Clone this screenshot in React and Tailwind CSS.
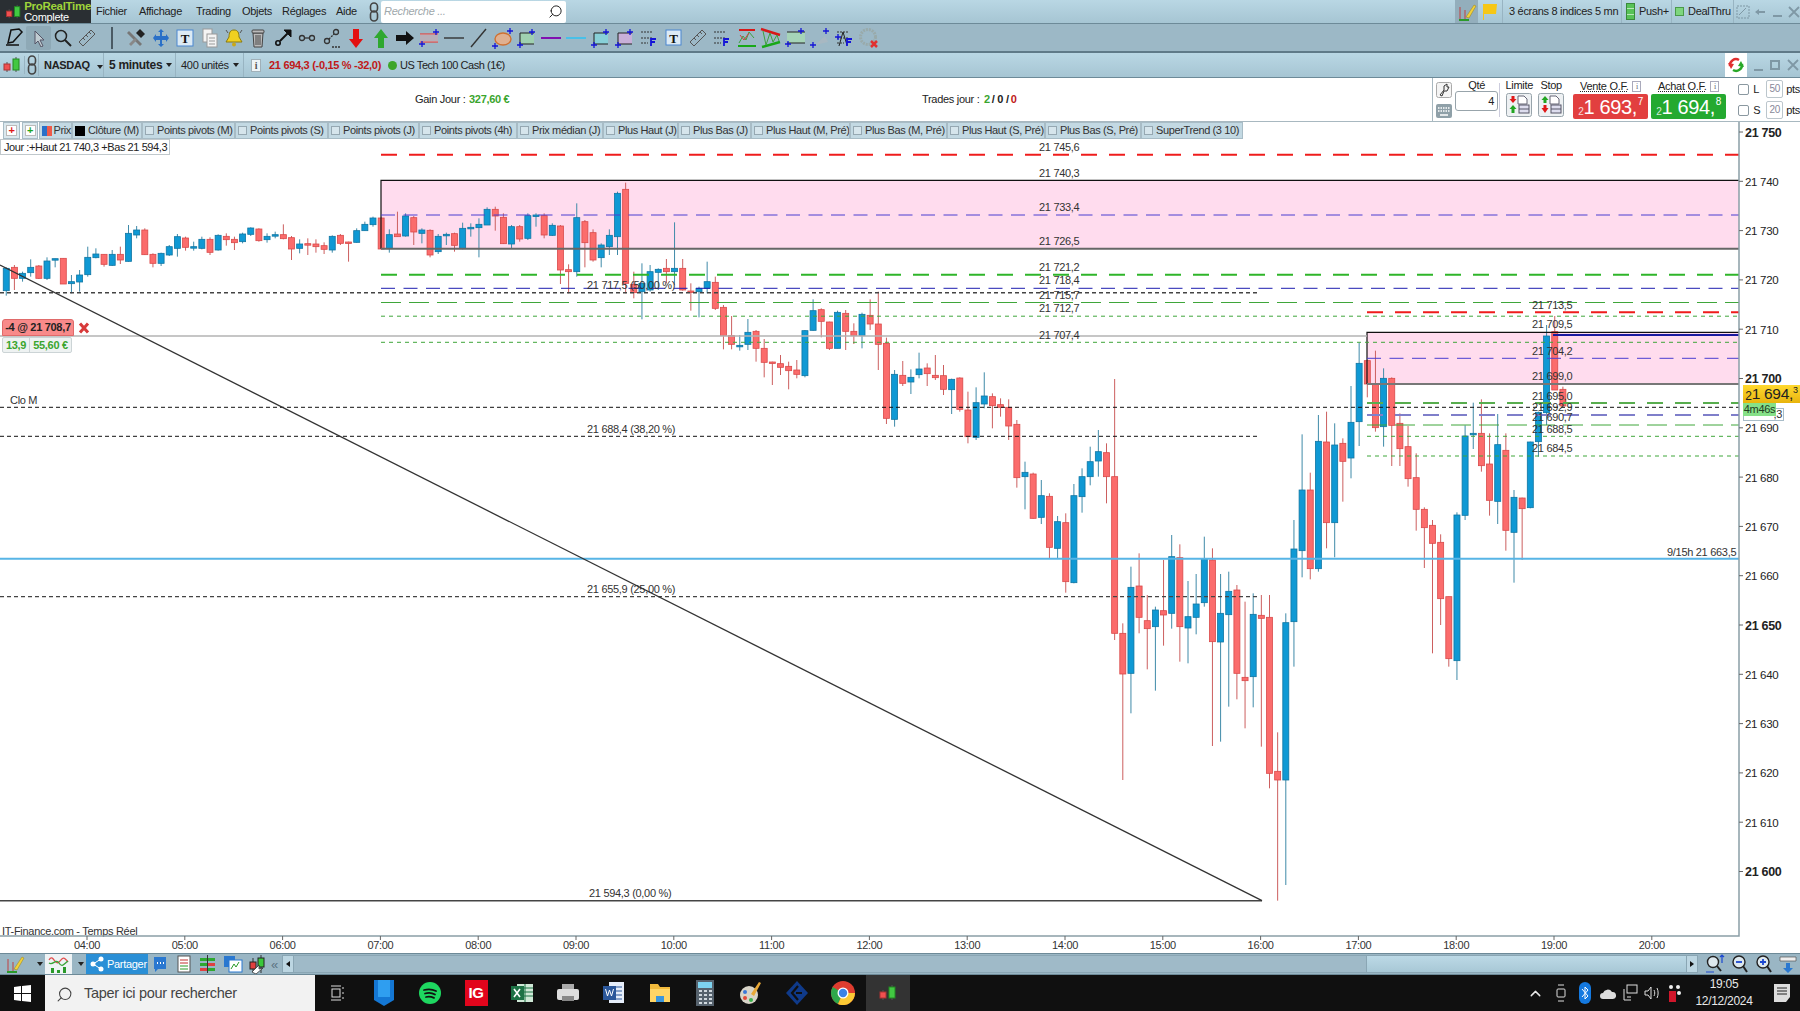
import { Search, ChevronUp } from 'lucide-react';

// rows are [blue?, wickTop, bodyTop, bodyBot, wickBot], measured on 3x crops of the chart
const block = (off, rows) => rows.map(([b, wt, t, d, wb]) => ({ blue: !!b, wt: (wt + off) / 3, t: (t + off) / 3, d: (d + off) / 3, wb: (wb + off) / 3 }));

const candles = [
  ...block(390, [
    [1,412,415,482,497],[0,405,412,445,480],[1,425,430,445,455],[1,388,412,428,440],[0,405,408,445,447],[1,382,393,445,450],
    [1,386,386,388,412],[0,385,385,462,462],[1,435,455,461,490],[1,420,435,456,485],[1,350,382,434,440],[1,355,372,383,385],
    [0,373,373,403,410],[1,360,373,406,408],[0,350,373,390,402],[1,285,310,394,395],[1,288,300,315,325],[0,295,300,374,375],
    [0,370,373,400,412],[1,368,370,400,408],[1,345,350,375,378],[1,312,320,355,380],[0,320,324,352,362],[1,335,350,352,362],
    [1,320,328,355,358],[0,322,328,367,375],[1,313,316,360,362],[0,310,319,329,347],[0,320,328,338,360],[1,308,312,335,340],
    [1,292,294,313,318],[0,295,297,332,335],[1,310,319,329,338],[1,305,314,317,325],[0,283,314,326,328],[0,318,323,357,390],
    [1,328,342,355,370],[0,325,341,344,375],[0,328,342,350,368],[0,337,347,358,372],[1,316,319,360,368],[0,312,316,340,345],
    [0,335,336,338,395],[1,295,302,337,338],[1,275,283,302,302],[1,260,264,284,290],[0,262,264,357,358],[1,298,314,356,368],
    [0,245,312,320,320],[1,250,258,318,320],[0,258,263,306,345],[1,295,300,310,340],[0,298,301,375,382],[1,312,319,365,372],
    [1,308,313,315,345],[0,308,311,346,365],[1,278,295,356,358],[1,280,292,294,320],[1,265,283,293,382],[1,232,238,285,285],
    [0,230,238,258,302],[0,250,262,341,342],[1,285,290,342,355],[0,285,290,327,335],[1,250,257,325,330],[1,250,255,257,290],
    [0,250,257,315,325],[1,280,286,316,318],[0,285,288,420,462],[0,403,419,425,490],[1,220,263,425,440],[0,270,275,338,412],
    [0,298,308,390,395],[1,340,345,383,412],[1,298,316,350,375],[1,185,190,320,375],[0,158,178,460,490],
  ]),
  ...block(420, [
    [0,395,433,458,475],[1,370,430,455,538],[1,375,395,450,455],[1,385,388,397,450],[0,357,385,395,430],[1,247,385,395,435],
    [0,357,385,450,452],[0,430,453,457,512],[1,440,445,455,532],[1,365,425,445,460],[0,410,427,505,510],[0,495,502,587,628],
    [0,528,587,613,628],[1,585,616,618,632],[1,537,577,613,630],[0,570,574,625,665],[0,597,625,667,712],[0,665,666,670,735],
    [0,645,671,682,705],[0,665,679,692,748],[0,660,690,703,715],[1,570,572,707,712],[1,478,512,571,572],[0,505,509,544,592],
    [0,545,546,625,630],[1,512,517,625,625],[0,510,520,574,630],[0,550,574,587,612],[1,518,523,587,625],[0,478,526,552,570],
    [0,455,552,613,690],[0,593,610,835,852],[1,690,703,838,860],[0,663,706,730,738],[1,688,712,726,762],[1,638,687,704,715],
    [0,670,684,701,738],[0,645,706,713,720],[0,675,707,748,765],[1,716,718,749,822],[0,712,714,808,815],[0,755,810,890,910],
    [1,742,788,892,900],[1,697,768,792,805],[0,760,770,797,865],
  ]),
  ...block(900, [
    [0,295,314,322,350],[0,298,322,378,420],[0,360,373,533,563],[1,485,517,530,628],[0,518,522,655,656],[1,540,587,652,672],
    [0,580,589,742,775],[1,648,665,745,775],[0,640,668,845,878],[1,552,587,848,850],[1,505,530,590,638],[1,440,485,530,556],
    [1,390,455,483,530],[0,430,458,530,610],[0,237,530,1000,1020],[0,970,1000,1122,1440],[1,800,862,1120,1240],[0,760,858,952,1000],
    [0,885,962,986,1108],[1,920,930,980,1172],[0,780,932,945,1037],[1,705,770,940,986],[0,733,773,980,1085],[1,843,950,984,1090],
    [1,822,912,952,1003],[1,710,778,908,920],[0,745,780,1025,1338],[1,822,940,1026,1325],[1,815,874,944,1220],[0,855,870,1120,1198],
    [0,905,1132,1142,1285],[1,880,943,1130,1222],[0,885,946,955,1340],[0,885,952,1420,1465],[0,1297,1414,1440,1802],[1,940,968,1440,1755],
    [1,660,747,965,1100],[1,403,570,752,832],[0,518,570,806,838],[1,345,424,806,815],[0,335,426,668,745],[1,370,435,668,772],
    [0,415,430,484,605],[1,258,367,474,535],[1,128,190,365,438],[0,180,182,252,292],[0,152,252,383,395],[1,205,235,380,440],
    [0,232,235,376,498],[0,340,370,446,498],[0,378,440,536,560],[0,460,533,628,692],[0,622,628,683,804],[0,660,676,730,1060],
    [0,703,727,896,975],[0,890,890,1076,1100],[1,637,645,1082,1140],[1,376,408,646,660],[1,308,400,404,447],[0,298,400,497,515],
    [0,400,492,601,647],[1,342,434,604,672],[0,400,451,691,752],[1,570,592,697,848],[0,593,594,626,780],[1,425,426,623,625],
    [1,335,337,425,470],[1,75,108,338,375],[0,48,95,270,270],[0,260,268,318,320],
  ]),
];

const GREEN = '#3fa63a';
const levels = [
  { y: 154.7, x1: 381, c: '#ef1c1c', w: 2, d: '16 12' },
  { y: 215, x1: 381, c: '#4a3ed0', w: 1, d: '14 8.5' },
  { y: 274.7, x1: 381, c: '#2fb52a', w: 2, d: '16 12' },
  { y: 288.3, x1: 381, c: '#1d1db0', w: 1, d: '14 8.5' },
  { y: 292.7, x1: 0, x2: 1258, c: '#444', w: 1.4, d: '4 3' },
  { y: 302.5, x1: 381, c: GREEN, w: 1, d: '20 8' },
  { y: 316.2, x1: 381, c: GREEN, w: 1, d: '4 4' },
  { y: 336, x1: 0, x2: 1367, c: '#b3b3b3', w: 1.5 },
  { y: 342.3, x1: 381, c: GREEN, w: 1, d: '4 4' },
  { y: 407.3, x1: 0, c: '#111', w: 1, d: '4 3' },
  { y: 436.3, x1: 0, x2: 1258, c: '#111', w: 1, d: '4 3' },
  { y: 558.7, x1: 0, c: '#57b5e6', w: 2 },
  { y: 596.7, x1: 0, x2: 1258, c: '#444', w: 1.2, d: '4 3' },
  { y: 900.7, x1: 0, x2: 1262, c: '#444', w: 1.5 },
  { y: 312.3, x1: 1367, c: '#ef1c1c', w: 2, d: '16 12' },
  { y: 335, x1: 1553, c: '#1a1aa0', w: 2 },
  { y: 358.3, x1: 1367, c: '#4a3ed0', w: 1, d: '14 8.5' },
  { y: 403, x1: 1367, c: '#58ad4e', w: 2, d: '16 12' },
  { y: 415, x1: 1367, c: '#7f7fca', w: 2, d: '16 12' },
  { y: 425, x1: 1367, c: GREEN, w: 1, d: '20 8' },
  { y: 436.3, x1: 1367, c: GREEN, w: 1, d: '4 4' },
  { y: 456, x1: 1367, c: GREEN, w: 1, d: '4 4' },
];

const priceLabels = [
  [1039, 147, '21 745,6'], [1039, 172.7, '21 740,3'], [1039, 207.3, '21 733,4'], [1039, 241, '21 726,5'], [1039, 267.3, '21 721,2'],
  [1039, 280.3, '21 718,4'], [1039, 294.7, '21 715,7'], [1039, 308.3, '21 712,7'], [1039, 334.7, '21 707,4'],
  [587, 285, '21 717,5 (50,00 %)'], [587, 428.7, '21 688,4 (38,20 %)'], [587, 589, '21 655,9 (25,00 %)'], [589, 893, '21 594,3 (0,00 %)'],
  [1532, 304.7, '21 713,5'], [1532, 324.3, '21 709,5'], [1532, 351, '21 704,2'], [1532, 376.3, '21 699,0'], [1532, 396, '21 695,0'],
  [1532, 407, '21 692,9'], [1532, 417.3, '21 690,7'], [1532, 428.7, '21 688,5'], [1532, 448.3, '21 684,5'],
  [1667, 551.7, '9/15h 21 663,5'], [10, 400, 'Clo M'], [2, 931, 'IT-Finance.com - Temps Réel'],
];

const axis = ['21 750','21 740','21 730','21 720','21 710','21 700','21 690','21 680','21 670','21 660','21 650','21 640','21 630','21 620','21 610','21 600'];
const hours = ['04:00','05:00','06:00','07:00','08:00','09:00','10:00','11:00','12:00','13:00','14:00','15:00','16:00','17:00','18:00','19:00','20:00'];

const legend = [
  ['Points pivots (M)', 'w-[93px]'], ['Points pivots (S)', 'w-[93px]'], ['Points pivots (J)', 'w-[91px]'], ['Points pivots (4h)', 'w-[98px]'],
  ['Prix médian (J)', 'w-[86px]'], ['Plus Haut (J)', 'w-[75px]'], ['Plus Bas (J)', 'w-[73px]'], ['Plus Haut (M, Pré)', 'w-[99px]'],
  ['Plus Bas (M, Pré)', 'w-[97px]'], ['Plus Haut (S, Pré)', 'w-[98px]'], ['Plus Bas (S, Pré)', 'w-[96px]'], ['SuperTrend (3 10)', 'w-[102px]'],
];

const Chart = () => (
  <svg viewBox="0 122 1800 831" className="block w-[1800px] h-[831px]" style={{ fontFamily: '"Liberation Sans", Arial, sans-serif' }}>
    <rect x="381" y="180.3" width="1358" height="68.4" fill="#ffdcee" />
    <rect x="1367" y="332.3" width="372" height="51.7" fill="#ffdcee" />
    {candles.map((c, i) => {
      const x = 6.25 + 8.15 * i;
      return (
        <g key={i}>
          <line x1={x} x2={x} y1={c.wt} y2={c.wb} stroke={c.blue ? '#3f8aa8' : '#cc5f5f'} />
          <rect x={x - 3} y={c.t} width="6" height={Math.max(c.d - c.t, 1.5)} fill={c.blue ? '#0f99d4' : '#fb6c6c'} stroke={c.blue ? '#0f76a3' : '#d94a4a'} strokeWidth="0.8" />
        </g>
      );
    })}
    <path d="M381 248.7V180.3H1739" fill="none" stroke="#111" strokeWidth="1.2" />
    <path d="M381 248.7H1739" stroke="#666" strokeWidth="2" />
    <path d="M1739 332.3H1367V384" fill="none" stroke="#111" strokeWidth="1.2" />
    <path d="M1367 384H1739" stroke="#777" strokeWidth="2" />
    {levels.map((l, i) => (
      <line key={i} x1={l.x1} x2={l.x2 ?? 1739} y1={l.y} y2={l.y} stroke={l.c} strokeWidth={l.w} strokeDasharray={l.d} />
    ))}
    <line x1="0" y1="265" x2="1262" y2="900.7" stroke="#333" strokeWidth="1.3" />
    {priceLabels.map(([x, y, t]) => (
      <text key={t} x={x} y={y + 4} fontSize="11" fill="#333">{t}</text>
    ))}
    {/* price axis */}
    <path d="M1739 122V936H0" fill="none" stroke="#8b9ea7" strokeWidth="1.5" />
    {axis.map((t, i) => {
      const y = 132 + 49.3 * i;
      const bold = i % 5 === 0;
      return (
        <g key={t}>
          <line x1="1739" x2="1743" y1={y} y2={y} stroke="#666" />
          <text x="1745" y={y + 4.5} fontSize={bold ? 12.5 : 11.5} fontWeight={bold ? 700 : 400} fill="#222">{t}</text>
        </g>
      );
    })}
    {hours.map((t, i) => {
      const x = 87 + 97.8 * i;
      return (
        <g key={t}>
          <line x1={x} x2={x} y1="936" y2="940" stroke="#666" />
          <text x={x} y="949" fontSize="11" fill="#333" textAnchor="middle">{t}</text>
        </g>
      );
    })}
  </svg>
);

const Box = ({ w = 22, children }) => (
  <svg width={w} height="22" viewBox={`0 0 ${w} 22`} className="shrink-0">{children}</svg>
);

const Plus = ({ x, y, c = '#1414d8' }) => <path d={`M${x - 3} ${y}h6M${x} ${y - 3}v6`} stroke={c} strokeWidth="1.3" />;

const FLines = ({ c = '#1414d8' }) => (
  <>
    <path d="M3 5h11M3 11h11M3 16h7" stroke="#333" strokeDasharray="2 1" />
    <path d="M13 19v-7h5M13 15h4" fill="none" stroke={c} strokeWidth="1.8" />
  </>
);

const toolIcons = [
  <path d="M8 3l8-1 3 3-9 10-5 1zM3 18h13" fill="none" stroke="#111" strokeWidth="1.5" />,
  null,
  <g fill="none" stroke="#222" strokeWidth="1.5"><circle cx="9" cy="9" r="5.5" /><path d="M13 13l6 6" strokeWidth="2" /></g>,
  <g fill="none" stroke="#555"><path d="M3 15L15 3l4 4L7 19z" /><path d="M7 11l2 2M10 8l2 2M13 5l2 2" /></g>,
  null,
  <g><path d="M4 4l13 13-2 2L2 6z" fill="#777" /><path d="M11 6l4-4 5 5-4 4z" fill="#222" /><path d="M4 17l6-6 2 2-6 6z" fill="#888" /></g>,
  <path d="M11 2l3 3h-2v4h4V7l3 4-3 4v-2h-4v4h2l-3 3-3-3h2v-4H6v2l-3-4 3-4v2h4V5H8z" fill="#2a70c8" />,
  <g><rect x="3" y="3" width="16" height="16" fill="#dceaf4" stroke="#4a86d0" /><text x="11" y="16" fontSize="13" fontWeight="700" textAnchor="middle" fontFamily='"Liberation Serif", serif' fill="#111">T</text></g>,
  <g stroke="#999" fill="#f4f4f4"><rect x="4" y="2" width="9" height="13" /><rect x="8" y="7" width="10" height="13" /><path d="M10 11h6M10 14h6M10 17h6" /></g>,
  <g><path d="M11 3c4 0 5 3 5 7l3 5H3l3-5c0-4 1-7 5-7z" fill="#f0d020" stroke="#8a7a10" /><circle cx="11" cy="17.5" r="2" fill="#c9a818" /><path d="M3 3l2 3M19 3l-2 3" stroke="#555" /></g>,
  <g fill="#bbb" stroke="#444"><path d="M6 6h10l-1 14H7z" /><rect x="5" y="3" width="12" height="3" rx="1" /><path d="M9 8v10M11 8v10M13 8v10" /></g>,
  <g stroke="#111" fill="none"><circle cx="6" cy="16" r="2.2" strokeWidth="1.6" /><path d="M8 14l9-9" strokeWidth="2" /><path d="M12 3h7v7z" fill="#111" /></g>,
  <g stroke="#333" fill="none" strokeWidth="1.3"><circle cx="6" cy="11" r="2.5" /><circle cx="16" cy="11" r="2.5" /><path d="M8.5 11h5" /></g>,
  <g stroke="#333" fill="none" strokeWidth="1.3"><circle cx="6" cy="14" r="2.5" /><circle cx="15" cy="5" r="2.5" /><path d="M8 12l5-5M11 20h9" strokeDasharray="2 1" /></g>,
  <path d="M8 2h6v10h4l-7 9-7-9h4z" fill="#e31010" />,
  <path d="M11 2l7 9h-4v10H8V11H4z" fill="#2fa82f" />,
  <path d="M2 8h10V4l8 7-8 7v-4H2z" fill="#111" />,
  <g><path d="M2 7h18M2 15h18" stroke="#d45a5a" strokeWidth="1.4" /><rect x="2" y="7" width="18" height="8" fill="#e0a0a0" opacity=".4" /><Plus x={18} y={5} /><Plus x={4} y={17} /></g>,
  <path d="M1 11h20" stroke="#333" strokeWidth="1.4" />,
  <path d="M4 20L19 2" stroke="#333" strokeWidth="1.4" />,
  <g><ellipse cx="11" cy="12" rx="8" ry="6" fill="#e0b090" stroke="#d07030" strokeWidth="1.4" /><Plus x={18} y={4} /><Plus x={3} y={19} /></g>,
  <g><rect x="4" y="6" width="14" height="11" fill="#9fd0b0" /><path d="M4 6h14M4 17h14M4 6v11" stroke="#222" /><Plus x={16} y={5} /><Plus x={4} y={18} /></g>,
  <path d="M1 11h20" stroke="#8010b0" strokeWidth="2" />,
  <path d="M1 11h20" stroke="#48c0e8" strokeWidth="2" />,
  <g><rect x="5" y="6" width="14" height="11" fill="#88d0d8" /><path d="M5 6h14M5 17h14M5 6v11" stroke="#222" /><Plus x={17} y={5} /><Plus x={5} y={18} /></g>,
  <g><rect x="4" y="6" width="14" height="11" fill="#c8b0d8" /><path d="M4 6h14M4 17h14M4 6v11" stroke="#222" /><Plus x={16} y={5} /><Plus x={4} y={18} /></g>,
  <FLines />,
  <g><rect x="3" y="3" width="15" height="15" fill="#dceaf4" stroke="#4a86d0" /><text x="10.5" y="15.5" fontSize="13" fontWeight="700" textAnchor="middle" fontFamily='"Liberation Serif", serif' fill="#111">T</text></g>,
  <g fill="none" stroke="#555"><path d="M3 15L15 3l4 4L7 19z" /><path d="M7 11l2 2M10 8l2 2M13 5l2 2" /></g>,
  <FLines />,
  <g fill="none"><path d="M3 3h16" stroke="#d81818" strokeWidth="2" /><path d="M2 19h18" stroke="#18a818" strokeWidth="2" /><path d="M3 16l4-7 3 4 3-8 5 6" stroke="#40a040" /><path d="M4 8l4 5 5-7" stroke="#d04040" /></g>,
  <g fill="none"><path d="M1 2l19 6" stroke="#d81818" strokeWidth="2.5" /><path d="M2 20l18-5" stroke="#18a818" strokeWidth="2.5" /><path d="M3 4l3 14 4-12 3 9 4-7 2 6" stroke="#40a040" /></g>,
  <g><rect x="2" y="5" width="18" height="11" fill="#a6d4b8" /><path d="M2 5h18M2 16h18" stroke="#222" /><Plus x={16} y={4} /><Plus x={3} y={17} /></g>,
  <g><path d="M6 18L16 9l3 6z" fill="#a8b8c2" /><Plus x={4} y={18} /><Plus x={17} y={4} /></g>,
  <g><path d="M5 19L9 5l4 13" fill="none" stroke="#222" /><FLines /><Plus x={4} y={10} /></g>,
  <g><circle cx="10" cy="10" r="7.5" fill="none" stroke="#9aa" strokeWidth="3" strokeDasharray="2 1" /><path d="M13 14l6 6M19 14l-6 6" stroke="#e03030" strokeWidth="2.5" /></g>,
];

const Bar = ({ className = '', children }) => (
  <div className={`flex items-center bg-linear-to-b from-[#b9d7e4] to-[#a6c5d3] text-[11px] text-[#222] border-b border-[#6d8a98] ${className}`}>{children}</div>
);

const Caret = () => <span className="ml-1 inline-block w-0 h-0 border-x-[3.5px] border-x-transparent border-t-[4px] border-t-[#222]" />;

const LinkIcon = () => (
  <svg width="12" height="22" viewBox="0 0 12 22" fill="none" stroke="#444" strokeWidth="1.6"><rect x="2.5" y="2" width="7" height="9" rx="3.5" /><rect x="2.5" y="10" width="7" height="10" rx="3.5" /></svg>
);

const MiniCandles = ({ h = 18 }) => (
  <svg width="18" height={h} viewBox="0 0 18 18"><path d="M4 6v10M13 1v15" stroke="#555" /><rect x="1" y="8" width="6" height="6" fill="#f05050" stroke="#a33" /><rect x="10" y="3" width="6" height="11" fill="#42c842" stroke="#282" /></svg>
);

const WinBtns = ({ dim }) => (
  <div className={`flex items-center gap-[7px] text-[#7f98a5] ${dim}`}>
    <span className="w-[9px] h-[2px] mt-[9px] bg-[#7f98a5]" />
    <span className="w-[10px] h-[10px] border-2 border-[#7f98a5]" />
    <svg width="12" height="12" viewBox="0 0 12 12"><path d="M1 1l10 10M11 1L1 11" stroke="#7f98a5" strokeWidth="1.8" /></svg>
  </div>
);

const OrderArrows = ({ flip }) => (
  <svg width="26" height="24" viewBox="0 0 26 24">
    <rect x=".5" y=".5" width="25" height="23" rx="2" fill="#eef1f3" stroke="#98a4ab" />
    <path d="M12 3h6l3 3v5h-9z" fill="#fff" stroke="#667" /><rect x="13" y="12" width="10" height="8" fill="#dde" stroke="#556" /><path d="M13 16h10" stroke="#556" />
    <path d={flip ? 'M7 3l3.5 4H8.500v3h-3V7H3.500z' : 'M5.500 3h3v3h2L7 10 3.500 6h2z'} fill={flip ? '#22a522' : '#e01818'} />
    <path d={flip ? 'M5.500 12h3v3h2L7 20l-3.500-5h2z' : 'M7 12l3.500 4H8.500v4h-3v-4H3.500z'} fill={flip ? '#e01818' : '#22a522'} />
  </svg>
);

const PriceBtn = ({ color, v, s }) => (
  <div className={`w-[75px] h-[25px] rounded-[2px] flex items-end justify-center text-white leading-none whitespace-nowrap ${color}`}>
    <span className="text-[10px] mb-[2px] opacity-80">2</span>
    <span className="text-[20px] mb-[2px] tracking-[-0.4px]">{v}</span>
    <span className="text-[10px] self-start mt-[3px] ml-[1px]">{s}</span>
  </div>
);

const InfoBox = () => <span className="w-[9px] h-[11px] ml-1 shrink-0 border border-[#aab] bg-white text-[8px] leading-[10px] text-center text-[#667] font-['Liberation_Serif']">i</span>;

const Check = () => <span className="w-[11px] h-[11px] rounded-[2px] border border-[#8a98a0] bg-white shrink-0" />;

const TradePanel = () => (
  <div className="w-[368px] h-full border-l border-[#a8b8c0] flex text-[11px] text-[#222]">
    <div className="w-[22px] pl-[3px] pt-[4px] flex flex-col gap-[6px]">
      <svg width="16" height="16" viewBox="0 0 16 16"><rect x=".5" y=".5" width="15" height="15" rx="2" fill="#f4f4f4" stroke="#aaa" /><path d="M4 13l4-5V4l3-2v3h2l-2 4H8l-2 5z" fill="none" stroke="#333" /></svg>
      <svg width="16" height="14" viewBox="0 0 16 14"><rect width="16" height="14" rx="2" fill="#8fa0a8" /><path d="M2 4h12M2 7h12" stroke="#fff" strokeDasharray="1.500 1" strokeWidth="1.500" /><path d="M4 11h8" stroke="#fff" strokeWidth="1.500" /></svg>
    </div>
    <div className="w-[48px] flex flex-col items-center pt-[1px]">
      <span className="leading-[13px]">Qté</span>
      <div className="w-[43px] h-[20px] mt-[-1px] rounded-[3px] border border-[#98a4ab] text-right pr-[3px] text-[11px] leading-[18px]">4</div>
    </div>
    <div className="w-[36px] pl-[3px] flex flex-col items-center pt-[1px] border-l border-[#ccd] h-[34px] mt-[5px] shrink-0">
      <span className="leading-[11px] mt-[-4px]">Limite</span>
      <span className="mt-[2px] h-[24px]"><OrderArrows /></span>
    </div>
    <div className="w-[32px] flex flex-col items-center pt-[1px] h-[34px] mt-[5px] shrink-0">
      <span className="leading-[11px] mt-[-4px]">Stop</span>
      <span className="mt-[2px] h-[24px]"><OrderArrows flip /></span>
    </div>
    <div className="ml-[6px] w-[75px] flex flex-col">
      <div className="h-[16px] flex items-center justify-center whitespace-nowrap"><span className="underline decoration-dotted">Vente O.F.</span><InfoBox /></div>
      <PriceBtn color="bg-[#e23f3f]" v="1 693," s="7" />
    </div>
    <div className="ml-[3px] w-[75px] flex flex-col">
      <div className="h-[16px] flex items-center justify-center whitespace-nowrap"><span className="underline decoration-dotted">Achat O.F.</span><InfoBox /></div>
      <PriceBtn color="bg-[#24a930]" v="1 694," s="8" />
    </div>
    <div className="ml-[12px] flex flex-col gap-[3px] pt-[2px]">
      {[['L', '50'], ['S', '20']].map(([n, v]) => (
        <div key={n} className="flex items-center h-[18px]">
          <Check /><span className="ml-[4px] w-[13px]">{n}</span>
          <span className="w-[17px] h-[18px] border border-[#bcc6cc] rounded-[2px] text-[10px] text-[#889] text-center leading-[16px]">{v}</span>
          <span className="ml-[3px]">pts</span>
        </div>
      ))}
    </div>
  </div>
);

const Legend = () => (
  <div className="flex h-[17px] items-stretch text-[11px] text-[#333] leading-[15px] whitespace-nowrap tracking-[-0.38px]">
    <div className="w-[17px] ml-[3px] border border-[#a8bcc6] bg-[#dbe8ee] flex items-center justify-center">
      <span className="w-[11px] h-[11px] flex items-center justify-center text-[11px] leading-none bg-white border border-[#bbb] font-bold text-[#e01818]">+</span>
    </div>
    <div className="w-[16px] ml-[2px] border border-[#a8bcc6] bg-[#dbe8ee] flex items-center justify-center">
      <span className="w-[11px] h-[11px] flex items-center justify-center text-[11px] leading-none bg-white border border-[#bbb] font-bold text-[#1fa51f]">+</span>
    </div>
    <div className="w-[33px] ml-[1px] flex items-center bg-[#c3d9e3] border border-[#a8bcc6] pl-[2px]">
      <span className="w-[5px] h-[10px] bg-[#2a70c8]" /><span className="w-[5px] h-[10px] bg-[#ef5a4a] mr-[2px]" />Prix
    </div>
    <div className="w-[70px] flex items-center bg-[#c3d9e3] border border-[#a8bcc6] pl-[2px] gap-[3px]">
      <span className="w-[10px] h-[10px] bg-black shrink-0" />Clôture (M)
    </div>
    {legend.map(([t, w]) => (
      <div key={t} className={`${w} flex items-center bg-[#c3d9e3] border border-[#a8bcc6] pl-[2px] gap-[3px] overflow-hidden`}>
        <span className="w-[9px] h-[9px] border border-[#96a8b2] bg-[#d6e5ec] shrink-0" />{t}
      </div>
    ))}
  </div>
);

const Taskbar = () => (
  <div className="flex items-center h-[36px] bg-[#101010] text-white">
    <div className="w-[45px] flex justify-center">
      <svg width="17" height="17" viewBox="0 0 17 17" fill="#fff"><path d="M0 2l7-1v7H0zM8 .9L17 0v8H8zM0 9h7v7l-7-1zM8 9h9v8l-9-1.100z" /></svg>
    </div>
    <div className="w-[270px] h-full bg-[#f2f2f2] flex items-center pl-[11px] pt-[2px] gap-[11px] text-[#444] text-[14.5px]">
      <Search size={17} strokeWidth={1.5} className="-scale-x-100" />
      <span>Taper ici pour rechercher</span>
    </div>
    <div className="flex items-center h-full">
      <div className="w-[46px] flex justify-center"><svg width="14" height="18" viewBox="0 0 14 18" fill="none" stroke="#ddd"><rect x="1" y="5" width="8" height="8" /><path d="M0 2h10M0 16h10M12 3v2M12 8v2M12 13v2" /></svg></div>
      <div className="w-[46px] flex justify-center"><svg width="20" height="26" viewBox="0 0 20 26"><path d="M0 0h20v20l-10 6-10-6z" fill="#1477d4" /><path d="M4 0h12v17H4z" fill="#2f9ef0" /></svg></div>
      <div className="w-[46px] flex justify-center"><svg width="22" height="22" viewBox="0 0 22 22"><circle cx="11" cy="11" r="11" fill="#1ed760" /><path d="M5 8c4-1 8-1 12 1M6 11.500c3-1 7-.8 10 1M7 15c3-.8 5-.5 8 .8" fill="none" stroke="#111" strokeWidth="1.800" strokeLinecap="round" /></svg></div>
      <div className="w-[46px] flex justify-center"><div className="w-[23px] h-[26px] bg-[#e2051c] text-[15px] font-bold leading-[26px] text-center">IG</div></div>
      <div className="w-[46px] flex justify-center"><svg width="22" height="22" viewBox="0 0 22 22"><rect x="6" y="2" width="16" height="18" fill="#cfe8d6" /><path d="M6 6h16M6 10h16M6 14h16M14 2v18" stroke="#1d7245" /><rect y="4" width="13" height="14" fill="#1d7245" /><path d="M3 7l6 8M9 7l-6 8" stroke="#fff" strokeWidth="1.600" /></svg></div>
      <div className="w-[46px] flex justify-center"><svg width="22" height="18" viewBox="0 0 22 18"><rect x="5" y="0" width="12" height="7" fill="#aaa" /><rect x="0" y="5" width="22" height="11" rx="2" fill="#ddd" /><rect x="5" y="12" width="12" height="5" fill="#888" /></svg></div>
      <div className="w-[46px] flex justify-center"><svg width="22" height="24" viewBox="0 0 22 24"><rect x="6" y="1" width="15" height="21" fill="#e6eefa" /><path d="M9 6h10M9 10h10M9 14h10M9 18h10" stroke="#2b579a" /><rect y="5" width="13" height="14" fill="#2b579a" /><path d="M2.500 8l2 7 2-6 2 6 2-7" fill="none" stroke="#fff" /></svg></div>
      <div className="w-[45px] flex justify-center"><svg width="22" height="22" viewBox="0 0 22 22"><path d="M1 2h8l2 3h10v15H1z" fill="#f1b93b" /><rect x="1" y="7" width="20" height="13" fill="#ffd566" /><rect x="7" y="14" width="8" height="6" fill="#3a96dd" /></svg></div>
      <div className="w-[46px] flex justify-center"><svg width="18" height="26" viewBox="0 0 18 26"><rect width="18" height="26" fill="#56626d" /><rect x="2" y="2" width="14" height="6" fill="#7dd3f0" /><path d="M3 11h3M8 11h3M13 11h3M3 15h3M8 15h3M13 15h3M3 19h3M8 19h3M13 19h3M3 23h3M8 23h3M13 23h3" stroke="#d0d8de" strokeWidth="2" /></svg></div>
      <div className="w-[46px] flex justify-center"><svg width="24" height="26" viewBox="0 0 24 26"><ellipse cx="10" cy="15" rx="9" ry="9" fill="#d8d4c8" /><circle cx="6" cy="12" r="2" fill="#3a78d8" /><circle cx="6" cy="18" r="2" fill="#e04a3a" /><circle cx="12" cy="20" r="2" fill="#3ab04a" /><path d="M12 14L20 2l2 1-7 13z" fill="#e8a838" /></svg></div>
      <div className="w-[46px] flex justify-center"><svg width="24" height="26" viewBox="0 0 24 26"><path d="M12 1l11 12-11 12L1 13z" fill="#0f3a8a" /><path d="M13 6l-6 7 6 7M11 13h6" fill="none" stroke="#101010" strokeWidth="2.200" /></svg></div>
      <div className="w-[46px] flex justify-center"><svg width="24" height="24" viewBox="0 0 24 24"><circle cx="12" cy="12" r="12" fill="#de3c2f" /><path d="M12 12L1.700 6A12 12 0 0 0 7 23z" fill="#2ea84a" /><path d="M12 12l-5 11A12 12 0 0 0 24 12z" fill="#fcc934" /><circle cx="12" cy="12" r="5.500" fill="#fff" /><circle cx="12" cy="12" r="4.200" fill="#3b82e6" /></svg></div>
      <div className="w-[44px] h-full bg-[#333] flex justify-center items-center"><MiniCandles h={24} /></div>
    </div>
    <div className="ml-auto flex items-center h-full text-[#e8e8e8]">
      <ChevronUp size={17} className="mr-[6px]" />
      <div className="w-[23px] flex justify-center"><svg width="13" height="20" viewBox="0 0 13 20" fill="none" stroke="#ddd"><rect x="2" y="6" width="8" height="8" rx="1" /><path d="M3 2h6M3 18h6" /></svg></div>
      <div className="w-[23px] flex justify-center"><svg width="12" height="22" viewBox="0 0 12 22"><rect width="12" height="22" rx="6" fill="#1479e0" /><path d="M3 7l6 7-3 3V5l3 3-6 7" fill="none" stroke="#fff" /></svg></div>
      <div className="w-[23px] flex justify-center"><svg width="16" height="11" viewBox="0 0 16 11" fill="#ddd"><path d="M3 11a3 3 0 0 1 0-6 5 5 0 0 1 9-1 3.500 3.500 0 0 1 1 7z" /></svg></div>
      <div className="w-[22px] flex justify-center"><svg width="16" height="18" viewBox="0 0 16 18" fill="none" stroke="#ddd"><rect x="5" y="1" width="10" height="8" /><path d="M2 5v11h7M5 13h4" /></svg></div>
      <div className="w-[22px] flex justify-center"><svg width="16" height="16" viewBox="0 0 16 16" fill="none" stroke="#ddd"><path d="M1 6h3l3-4v12l-3-4H1zM10 5c1 2 1 4 0 6M13 3c1.500 3 1.500 7 0 10" /></svg></div>
      <div className="w-[24px] flex justify-center"><svg width="14" height="18" viewBox="0 0 14 18"><rect x="1" y="7" width="7" height="11" fill="#d0162b" /><circle cx="3" cy="3" r="2" fill="#eee" /><circle cx="10" cy="3" r="2" fill="#eee" /><circle cx="11" cy="9" r="2" fill="#eee" /></svg></div>
      <div className="w-[68px] ml-[3px] flex flex-col items-center text-[12px] leading-[17px]"><span>19:05</span><span>12/12/2024</span></div>
      <div className="w-[42px] pl-[6px] flex justify-center"><svg width="16" height="18" viewBox="0 0 16 18"><path d="M0 0h16v13l-4 5H0z" fill="#ddd" /><path d="M3 4h10M3 7h10M3 10h10" stroke="#222" /></svg></div>
    </div>
  </div>
);

export default function App() {
  return (
    <div className="w-[1800px] h-[1011px] overflow-hidden flex flex-col bg-white tracking-[-0.3px] font-['Liberation_Sans',Arial,sans-serif]">
      {/* main menu */}
      <Bar className="h-[24px]">
        <div className="w-[91px] h-[23px] bg-[#2a2f33] flex items-center pl-[5px] gap-[2px]">
          <MiniCandles h={16} />
          <div className="flex flex-col text-white text-[11px] leading-[11px]">
            <span className="text-[#9fd43a] text-[11.5px] font-bold whitespace-nowrap">ProRealTime</span>
            <span>Complete</span>
          </div>
        </div>
        <div className="flex ml-[5px] whitespace-nowrap">
          <span className="w-[43px]">Fichier</span><span className="w-[57px]">Affichage</span><span className="w-[46px]">Trading</span>
          <span className="w-[40px]">Objets</span><span className="w-[54px]">Réglages</span><span className="w-[31px]">Aide</span>
        </div>
        <div className="w-[14px] flex justify-center"><LinkIcon /></div>
        <div className="w-[185px] h-[22px] rounded-[2px] bg-white flex items-center justify-between px-[3px] text-[#a0a8ac] italic">
          Recherche ...
          <Search size={15} strokeWidth={1.6} className="text-[#222] -scale-x-100" />
        </div>
        <div className="ml-auto flex items-center h-full whitespace-nowrap">
          <div className="w-[23px] h-full bg-[#93aebc] flex items-center justify-center">
            <svg width="20" height="20" viewBox="0 0 20 20"><path d="M3 18V5M8 18V8" stroke="#c04040" /><path d="M2 18h10" stroke="#2a9a2a" strokeWidth="2" /><path d="M9 15l8-12 2 1-7 12z" fill="#f2d13a" stroke="#97801a" strokeWidth=".5" /></svg>
          </div>
          <div className="w-[24px] flex justify-center"><svg width="16" height="18" viewBox="0 0 16 18"><path d="M1 1h14l-1 10H2v6H1z" fill="#f6c716" /></svg></div>
          <div className="w-[120px] h-full pl-[6px] border-x border-[#98b4c2] flex items-center">3 écrans 8 indices 5 mn</div>
          <div className="w-[50px] h-full pl-[4px] border-r border-[#98b4c2] flex items-center gap-[4px]">
            <span className="w-[9px] h-[17px] bg-[#58c258] border border-[#3a8a3a] flex flex-col justify-evenly"><i className="h-[1px] bg-[#b8e8b8]" /><i className="h-[1px] bg-[#b8e8b8]" /></span>
            Push+
          </div>
          <div className="w-[62px] h-full pl-[3px] border-r border-[#98b4c2] flex items-center gap-[4px]">
            <span className="w-[9px] h-[9px] bg-[#7ed67e] border border-[#4a9a4a]" />DealThru
          </div>
          <div className="w-[66px] pl-[2px] flex items-center gap-[5px]">
            <svg width="14" height="14" viewBox="0 0 14 14" fill="none" stroke="#7f98a5"><path d="M1 1h12v12H1z" strokeDasharray="2 1" /><path d="M3 10l7-7" /></svg>
            <svg width="10" height="10" viewBox="0 0 10 10" fill="#7f98a5"><path d="M0 5l4-3v2h6v2H4v2z" /></svg>
            <span className="w-[9px] h-[2px] mt-[9px] ml-[3px] bg-[#7f98a5]" />
            <svg width="12" height="12" viewBox="0 0 12 12" className="ml-[1px]"><path d="M1 1l10 10M11 1L1 11" stroke="#7f98a5" strokeWidth="1.800" /></svg>
          </div>
        </div>
      </Bar>

      {/* drawing tools */}
      <div className="flex items-center h-[29px] pl-[2px] bg-[#9cb8c6] border-b-2 border-[#5f7a88]">
        {toolIcons.map((ic, i) => {
          if (i === 1) {
            return (
              <div key={i} className="w-[24.43px] h-[24px] rounded-[2px] bg-[#8ea9b6] flex items-center justify-center">
                <svg width="14" height="18" viewBox="0 0 14 18"><path d="M3 2l9 9H8l3 6-2 1-3-6-3 3z" fill="#c0ccd2" stroke="#556" /></svg>
              </div>
            );
          }
          if (i === 4) return <div key={i} className="w-[24.43px] flex justify-center"><span className="w-[2px] h-[22px] bg-[#4a5a64]" /></div>;
          return <div key={i} className="w-[24.43px] flex justify-center"><Box>{ic}</Box></div>;
        })}
      </div>

      {/* instrument bar */}
      <Bar className="h-[25px]">
        <div className="w-[25px] flex justify-center border-r border-[#98b4c2]"><MiniCandles h={18} /></div>
        <div className="w-[14px] flex justify-center border-r border-[#98b4c2]"><LinkIcon /></div>
        <div className="w-[65px] h-full pl-[5px] border-r border-[#98b4c2] flex items-center font-bold">NASDAQ<span className="ml-[3px]"><Caret /></span></div>
        <div className="w-[72px] h-full pl-[5px] border-r border-[#98b4c2] flex items-center font-bold text-[12px] whitespace-nowrap">5 minutes<Caret /></div>
        <div className="w-[68px] h-full pl-[5px] border-r border-[#98b4c2] flex items-center whitespace-nowrap">400 unités<Caret /></div>
        <span className="ml-[7px] w-[10px] h-[13px] bg-[#eef4f7] border border-[#a0b0b8] text-[10px] leading-[11px] text-center font-bold text-[#555] font-['Liberation_Serif']">i</span>
        <span className="ml-[8px] text-[#c01818] font-bold whitespace-nowrap">21 694,3 (-0,15 % -32,0)</span>
        <span className="ml-[7px] w-[9px] h-[9px] rounded-full bg-[#3da52a]" />
        <span className="ml-[3px] whitespace-nowrap tracking-[-0.45px]">US Tech 100 Cash (1€)</span>
        <div className="ml-auto flex items-center h-full">
          <div className="w-[22px] h-full bg-white flex items-center justify-center">
            <svg width="18" height="18" viewBox="0 0 18 18" fill="none" strokeWidth="2.500"><path d="M3 10a6 6 0 0 1 9-6" stroke="#e03030" /><path d="M1 7l3 6 3-5z" fill="#e03030" /><path d="M15 8a6 6 0 0 1-9 6" stroke="#28a828" /><path d="M17 11l-3-6-3 5z" fill="#28a828" /></svg>
          </div>
          <WinBtns dim="w-[53px] pl-[7px]" />
        </div>
      </Bar>

      {/* account and order ticket */}
      <div className="h-[44px] flex items-center border-b border-[#a8b8c0] text-[11px] text-[#222] bg-white">
        <div className="w-[1432px] flex items-center pl-[415px] whitespace-nowrap">
          <span className="w-[54px]">Gain Jour :</span>
          <span className="w-[453px] font-bold text-[#3aa52e]">327,60 €</span>
          <span className="w-[62px]">Trades jour :</span>
          <span className="font-bold text-[#3aa52e]">2</span>
          <span className="font-bold mx-[2px]">/ 0 /</span>
          <span className="font-bold text-[#c01818]">0</span>
        </div>
        <TradePanel />
      </div>

      {/* chart */}
      <div className="relative h-[831px] bg-white">
        <Chart />
        <div className="absolute left-0 top-0"><Legend /></div>
        <div className="absolute left-0 top-[17px] w-[170px] h-[16px] pl-[3px] border border-[#c0c8cc] bg-white text-[11px] leading-[14px] text-[#222] whitespace-nowrap tracking-[-0.42px]">Jour :+Haut 21 740,3 +Bas 21 594,3</div>
        <div className="absolute left-[2px] top-[197px] flex items-center text-[11px]">
          <div className="w-[72px] h-[17px] rounded-t-[3px] bg-[#f88a8a] border border-[#e06a6a] font-bold text-[#222] leading-[15px] text-center whitespace-nowrap">-4 @ 21 708,7</div>
          <svg width="20" height="12" viewBox="0 0 20 12"><path d="M6 1.500l8 9M14 1.500l-8 9" stroke="#d83a3a" strokeWidth="3" /></svg>
        </div>
        <div className="absolute left-[2px] top-[215px] flex h-[16px] rounded-[2px] bg-[#eef2f2] border border-[#ccd4d6] text-[11px] font-bold text-[#3aa52e] leading-[14px] text-center">
          <span className="w-[27px] border-r border-[#ccd4d6]">13,9</span>
          <span className="w-[41px]">55,60 €</span>
        </div>
        <div className="absolute left-[1743px] top-[263px] w-[57px] h-[18px] bg-linear-to-b from-[#ffd92e] to-[#e8b40c] flex items-center justify-center leading-none text-[#222] whitespace-nowrap">
          <span className="text-[12px] mt-[3px]">2</span><span className="text-[15.5px]">1 694,</span><span className="text-[9px] self-start mt-[1px]">3</span>
        </div>
        <div className="absolute left-[1743px] top-[286px] w-[41px] h-[13px] bg-white border border-[#a8bcc8] text-[11px] leading-[11px] text-right pr-[1px] text-[#333]">,3</div>
        <div className="absolute left-[1743px] top-[281px] w-[33px] h-[13px] bg-[#86e088] text-[11px] leading-[13px] text-center text-[#1f3a1f]">4m46s</div>
      </div>

      {/* bottom toolbar */}
      <div className="h-[22px] flex items-center bg-[#9ab6c4] border-y border-[#6d8a98] text-white text-[11px]">
        <div className="w-[30px] flex justify-center"><svg width="20" height="20" viewBox="0 0 20 20"><path d="M3 18V5M8 18V8" stroke="#c04040" /><path d="M2 18h10" stroke="#2a9a2a" strokeWidth="2" /><path d="M9 15l8-12 2 1-7 12z" fill="#f2d13a" stroke="#97801a" strokeWidth=".5" /></svg></div>
        <div className="w-[15px] flex justify-center"><Caret /></div>
        <div className="w-[27px] h-full bg-[#eef3f5] flex justify-center items-center"><svg width="22" height="20" viewBox="0 0 22 20" fill="none"><path d="M1 6c4-7 6 6 10 2s4-6 9 0" stroke="#e05050" strokeWidth="1.300" /><path d="M1 9c4 3 7-5 10 0s5 1 9-2" stroke="#3aa53a" strokeWidth="1.300" /><path d="M3 14h3v5H3zM9 16h3v3H9zM15 13h3v6h-3z" fill="#2a9a2a" /></svg></div>
        <div className="w-[14px] flex justify-center"><Caret /></div>
        <div className="w-[62px] h-full bg-[#2a8fd6] flex items-center pl-[4px] gap-[3px]">
          <svg width="14" height="16" viewBox="0 0 14 16" fill="#fff"><circle cx="11" cy="3" r="2.500" /><circle cx="3" cy="8" r="2.500" /><circle cx="11" cy="13" r="2.500" /><path d="M11 3L3 8l8 5" fill="none" stroke="#fff" /></svg>
          Partager
        </div>
        <div className="flex items-center pl-[4px] gap-[5px]">
          <svg width="18" height="18" viewBox="0 0 18 18"><path d="M2 2h12v12H6l-3 3v-3H2z" fill="#2a78d0" /><path d="M5 8h1M8 8h1M11 8h1" stroke="#fff" strokeWidth="2" /></svg>
          <svg width="18" height="18" viewBox="0 0 18 18"><rect x="3" y="1" width="12" height="16" fill="#fff" stroke="#555" /><path d="M5 5h8M5 8h8" stroke="#c03030" /><path d="M5 11h8M5 14h8" stroke="#2a9a2a" /></svg>
          <svg width="20" height="18" viewBox="0 0 20 18"><path d="M2 3h7v3H2zM10 3h7v3h-7zM2 8h7v3H2zM10 13h7v3h-7z" fill="#2fa82f" /><path d="M10 8h7v3h-7zM2 13h7v3H2z" fill="#e04040" /><path d="M9.500 0v18" stroke="#333" /></svg>
          <svg width="20" height="18" viewBox="0 0 20 18"><rect x="1" y="1" width="11" height="11" fill="#2a78d0" /><rect x="6" y="5" width="13" height="12" fill="#fff" stroke="#2a78d0" /><path d="M8 14l3-5 2 3 3-5" fill="none" stroke="#2a9a2a" /></svg>
          <svg width="18" height="20" viewBox="0 0 18 20"><path d="M13 1v18M5 4v14" stroke="#333" /><rect x="10" y="4" width="6" height="9" fill="#3ac83a" stroke="#222" /><rect x="2" y="8" width="6" height="7" fill="#e04040" stroke="#222" /><path d="M4 18l7-7v4l4-1-7 6z" fill="#fff" stroke="#222" strokeWidth=".7" /></svg>
        </div>
        <span className="ml-[5px] text-[13px] text-[#5a7482] leading-none">«</span>
        <div className="ml-[4px] w-[12px] h-[18px] bg-[#bcd6e2] border border-[#8aa6b4] flex items-center justify-center"><span className="w-0 h-0 border-y-[3.500px] border-y-transparent border-r-[4px] border-r-[#111]" /></div>
        <div className="w-[1392px] h-[18px] flex border-y border-[#8aa6b4] bg-[#9fbac8]">
          <div className="w-[1072px]" />
          <div className="flex-1 bg-linear-to-b from-[#bcd9e6] to-[#a8c8d6] border-l border-[#8aa6b4]" />
        </div>
        <div className="w-[12px] h-[18px] bg-[#bcd6e2] border border-[#8aa6b4] flex items-center justify-center"><span className="w-0 h-0 border-y-[3.500px] border-y-transparent border-l-[4px] border-l-[#111]" /></div>
        <div className="flex items-center pl-[7px] gap-[6px]">
          <svg width="20" height="20" viewBox="0 0 20 20" fill="none"><circle cx="8" cy="8" r="5.500" fill="#dde8ee" stroke="#222" strokeWidth="1.400" /><path d="M12 12l4 5" stroke="#222" strokeWidth="2" /><path d="M17 1v8M15 3l2-2 2 2M1 18h8" stroke="#1c48d0" strokeWidth="1.200" /></svg>
          <svg width="18" height="20" viewBox="0 0 18 20" fill="none"><circle cx="8" cy="8" r="6" fill="#dde8ee" stroke="#222" strokeWidth="1.400" /><path d="M12 12l4 6" stroke="#222" strokeWidth="2" /><path d="M5 8h6" stroke="#1c48d0" strokeWidth="1.800" /></svg>
          <svg width="18" height="20" viewBox="0 0 18 20" fill="none"><circle cx="8" cy="8" r="6" fill="#dde8ee" stroke="#222" strokeWidth="1.400" /><path d="M12 12l4 6" stroke="#222" strokeWidth="2" /><path d="M5 8h6M8 5v6" stroke="#1c48d0" strokeWidth="1.800" /></svg>
          <svg width="18" height="20" viewBox="0 0 18 20"><path d="M1 3h16v4H1z" fill="#eee" stroke="#555" strokeWidth=".7" /><path d="M7 9h4v5h3l-5 5-5-5h3z" fill="#2a78d0" /></svg>
        </div>
      </div>

      <Taskbar />
    </div>
  );
}
